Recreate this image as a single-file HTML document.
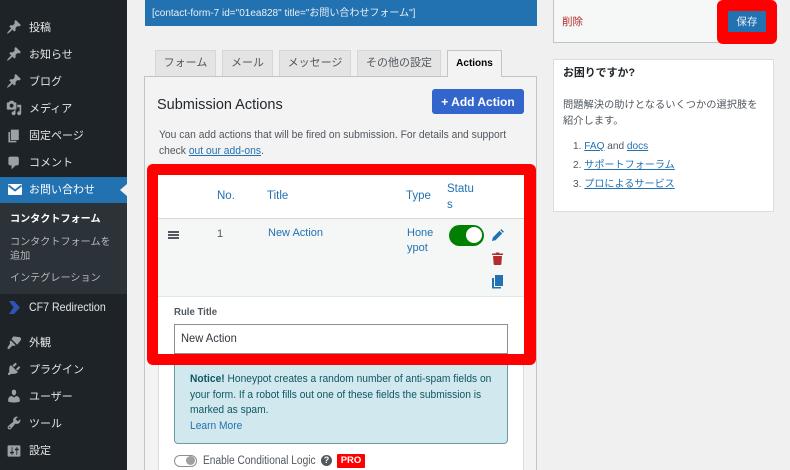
<!DOCTYPE html>
<html style="overflow:hidden"><head><meta charset="utf-8">
<style>
html,body{margin:0;padding:0}
body{width:790px;height:470px;overflow:hidden;background:#f0f0f1;font-family:"Liberation Sans","Noto Sans CJK JP",sans-serif;font-size:12px;color:#50575e}
#w{position:absolute;left:0;top:0;width:790px;height:470px;overflow:hidden;background:#f0f0f1}
.a{position:absolute;white-space:nowrap;transform-origin:0 0}
.b{position:absolute;box-sizing:border-box}
.m{position:absolute;left:29px;color:#e4e6e8;font-size:11px;line-height:16px;white-space:nowrap}
.s{position:absolute;left:10px;color:#b4b9be;font-size:10.100px;line-height:16px;white-space:nowrap}
.t{position:absolute;top:50px;height:26px;box-sizing:border-box;background:#e4e4e4;border:1px solid #d5d6d8;border-bottom:0;text-align:center;line-height:24px;font-size:11px;color:#50575e}
.l{color:#2271b1}
u{text-decoration:underline}
svg{position:absolute;display:block}
.i{fill:#9ca1a7}
</style></head><body><div id="w">
<div class="b" style="left:0;top:0;width:127px;height:470px;background:#1d2327"></div>
<div class="b" style="left:0;top:177px;width:127px;height:26px;background:#2271b1"></div>
<div class="b" style="left:0;top:203px;width:127px;height:91px;background:#2c3338"></div>
<div class="b" style="left:120px;top:184px;width:0;height:0;border:6px solid transparent;border-left:0;border-right:7px solid #f0f0f1"></div>

<svg style="left:6px;top:19px" width="16" height="16" viewBox="0 0 20 20"><path class="i" d="M10.44 3.02l1.82-1.82 6.36 6.35-1.83 1.82c-1.05-.68-2.48-.57-3.41.36l-.75.75c-.92.93-1.04 2.35-.35 3.41l-1.83 1.82-2.41-2.41-2.8 2.79c-.42.42-3.38 2.71-3.8 2.29s1.86-3.39 2.28-3.81l2.79-2.79L4.1 9.36l1.83-1.82c1.05.69 2.48.57 3.4-.36l.75-.75c.93-.92 1.05-2.35.36-3.41z"/></svg>
<svg style="left:6px;top:46px" width="16" height="16" viewBox="0 0 20 20"><path class="i" d="M10.44 3.02l1.82-1.82 6.36 6.35-1.83 1.82c-1.05-.68-2.48-.57-3.41.36l-.75.75c-.92.93-1.04 2.35-.35 3.41l-1.83 1.82-2.41-2.41-2.8 2.79c-.42.42-3.38 2.71-3.8 2.29s1.86-3.39 2.28-3.81l2.79-2.79L4.1 9.36l1.83-1.82c1.05.69 2.48.57 3.4-.36l.75-.75c.93-.92 1.05-2.35.36-3.41z"/></svg>
<svg style="left:6px;top:73px" width="16" height="16" viewBox="0 0 20 20"><path class="i" d="M10.44 3.02l1.82-1.82 6.36 6.35-1.83 1.82c-1.05-.68-2.48-.57-3.41.36l-.75.75c-.92.93-1.04 2.35-.35 3.41l-1.83 1.82-2.41-2.41-2.8 2.79c-.42.42-3.38 2.71-3.8 2.29s1.86-3.39 2.28-3.81l2.79-2.79L4.1 9.36l1.83-1.82c1.05.69 2.48.57 3.4-.36l.75-.75c.93-.92 1.05-2.35.36-3.41z"/></svg>
<svg style="left:6px;top:100px" width="16" height="16" viewBox="0 0 20 20"><path class="i" d="M13 11V4c0-.55-.45-1-1-1h-1.670L9 1H5L3.670 3H2c-.55 0-1 .45-1 1v7c0 .55.45 1 1 1h10c.55 0 1-.45 1-1zM7 4.500c1.380 0 2.500 1.120 2.500 2.500S8.380 9.500 7 9.500 4.500 8.380 4.500 7 5.620 4.500 7 4.500zM14 6h5v10.500c0 1.380-1.120 2.500-2.500 2.500S14 17.880 14 16.500s1.120-2.500 2.500-2.500c.17 0 .34.02.5.050V9h-3V6zm-4 8.050V13h2v3.500c0 1.380-1.120 2.500-2.500 2.500S7 17.880 7 16.500 8.120 14 9.500 14c.17 0 .34.02.5.050z"/></svg>
<svg style="left:6px;top:128px" width="16" height="16" viewBox="0 0 20 20"><path class="i" d="M6 15V2h10v13H6zm-1 1h8v2H3V5h2v11z"/></svg>
<svg style="left:6px;top:155px" width="16" height="16" viewBox="0 0 20 20"><path class="i" d="M5 2h9c1.100 0 2 .9 2 2v7c0 1.100-.9 2-2 2h-2l-5 5v-5H5c-1.100 0-2-.9-2-2V4c0-1.100.9-2 2-2z"/></svg>
<svg style="left:8px;top:184px" width="14" height="11" viewBox="0 0 14 11"><rect width="14" height="11" rx="1" fill="#fff"/><path d="M0.500 1.500L7 6.500l6.500-5" fill="none" stroke="#2271b1" stroke-width="1.800"/></svg>
<svg style="left:9px;top:301px" width="11" height="13" viewBox="0 0 11 13"><path d="M0 0h5l6 6.500L5 13H0l4.500-6.500z" fill="#2f55b4"/></svg>
<svg style="left:6px;top:334px" width="16" height="16" viewBox="0 0 20 20"><path class="i" d="M9 3l9 1 1 3-5 6.500-7-7zM6 8l6 6-2 1-2-.5L3.500 19 1.500 17.500 5 12l-.5-2z"/></svg>
<svg style="left:6px;top:361px" width="16" height="16" viewBox="0 0 20 20"><path class="i" d="M13.110 4.360L9.870 7.600 8 5.730l3.240-3.240c.35-.34 1.050-.2 1.560.32.520.510.660 1.210.310 1.550zm-8 1.770l.91-1.120 9.010 9.010-1.190.84c-.71.710-2.630 1.160-3.820 1.160H6.140L4.900 17.260c-.59.590-1.540.59-2.120 0-.59-.58-.59-1.530 0-2.120l1.240-1.240v-3.880c0-1.130.4-3.190 1.090-3.890zm7.260 3.970l3.240-3.240c.340-.350 1.040-.21 1.550.31.520.510.660 1.210.310 1.550l-3.240 3.250z"/></svg>
<svg style="left:6px;top:388px" width="16" height="16" viewBox="0 0 20 20"><path class="i" d="M10 9.250c-2.270 0-2.730-3.440-2.730-3.440C7 4.020 7.820 2 9.970 2c2.160 0 2.980 2.020 2.710 3.810 0 0-.41 3.440-2.680 3.440zm0 2.570L12.720 10c2.390 0 4.520 2.330 4.520 4.530v2.490s-3.650 1.130-7.240 1.130c-3.650 0-7.240-1.130-7.240-1.130v-2.490c0-2.250 1.940-4.480 4.470-4.480z"/></svg>
<svg style="left:6px;top:415px" width="16" height="16" viewBox="0 0 20 20"><path class="i" d="M16.680 9.770c-1.340 1.340-3.300 1.670-4.950.99l-5.410 6.520c-.99.990-2.590.99-3.580 0s-.99-2.590 0-3.570l6.520-5.420c-.68-1.650-.35-3.610.99-4.950 1.280-1.280 3.120-1.620 4.720-1.060l-2.890 2.890 2.820 2.820 2.860-2.870c.53 1.580.18 3.400-1.080 4.650zM3.810 16.210c.4.390 1.040.39 1.430 0 .4-.4.4-1.040 0-1.430-.39-.4-1.030-.4-1.430 0-.39.39-.39 1.030 0 1.430z"/></svg>
<svg style="left:6px;top:443px" width="16" height="16" viewBox="0 0 20 20"><path class="i" d="M18 16V4c0-.55-.45-1-1-1H3c-.55 0-1 .45-1 1v12c0 .55.45 1 1 1h14c.55 0 1-.45 1-1zM8 11h1c.55 0 1 .45 1 1s-.45 1-1 1H8v1.500c0 .280-.22.5-.5.5s-.5-.22-.5-.5V13H6c-.55 0-1-.45-1-1s.45-1 1-1h1V5.500c0-.28.22-.5.5-.5s.5.220.5.5V11zm5-2h-1c-.55 0-1-.45-1-1s.45-1 1-1h1V5.500c0-.28.22-.5.5-.5s.5.220.5.5V7h1c.55 0 1 .45 1 1s-.45 1-1 1h-1v5.500c0 .280-.22.5-.5.5s-.5-.22-.5-.5V9z"/></svg>

<div class="m" style="top:20px">投稿</div>
<div class="m" style="top:47px">お知らせ</div>
<div class="m" style="top:74px">ブログ</div>
<div class="m" style="top:101px">メディア</div>
<div class="m" style="top:128px">固定ページ</div>
<div class="m" style="top:155px">コメント</div>
<div class="m" style="top:182px;color:#fff">お問い合わせ</div>
<div class="s" style="top:212px;color:#fff;font-weight:bold">コンタクトフォーム</div>
<div class="s" style="top:235px">コンタクトフォームを</div>
<div class="s" style="top:249px">追加</div>
<div class="s" style="top:271px">インテグレーション</div>
<div class="a" style="left:29px;top:299px;font-size:12px;line-height:16px;color:#e4e6e8;transform:scaleX(.885)">CF7 Redirection</div>
<div class="m" style="top:335px">外観</div>
<div class="m" style="top:362px">プラグイン</div>
<div class="m" style="top:389px">ユーザー</div>
<div class="m" style="top:416px">ツール</div>
<div class="m" style="top:443px">設定</div>

<div class="b" style="left:145px;top:0;width:392px;height:26px;background:#2271b1"></div>
<div class="a" style="left:152px;top:6px;font-size:10px;line-height:15px;color:#e8f0f6">[contact-form-7 id="01ea828" title="お問い合わせフォーム"]</div>

<div class="b" style="left:144px;top:76px;width:393px;height:394px;background:#f3f3f3;border:1px solid #c3c4c7;border-bottom:0"></div>
<div class="t" style="left:155px;width:61px">フォーム</div>
<div class="t" style="left:222px;width:51px">メール</div>
<div class="t" style="left:279px;width:72px">メッセージ</div>
<div class="t" style="left:357px;width:84px">その他の設定</div>
<div class="t" style="left:447px;width:55px;height:27px;line-height:25px;background:#f3f3f3;border-color:#c3c4c7;color:#000;font-weight:bold;font-size:10px">Actions</div>

<div class="a" style="left:157px;top:96px;font-size:14.500px;line-height:18px;color:#23282d">Submission Actions</div>
<div class="b" style="left:432px;top:89px;width:92px;height:25px;background:#3366cc;border-radius:3px;color:#fff;font-size:12px;font-weight:bold;line-height:26px;text-align:center">+ Add Action</div>
<div class="a" style="left:159px;top:127px;font-size:11.300px;line-height:16px;transform:scaleX(.913)">You can add actions that will be fired on submission. For details and support</div>
<div class="a" style="left:159px;top:143px;font-size:11.300px;line-height:16px;transform:scaleX(.913)">check <u class="l">out our add-ons</u>.</div>

<div class="b" style="left:158px;top:350px;width:366px;height:120px;background:#fff;border-left:1px solid #dcdcde;border-right:1px solid #dcdcde"></div>
<div class="b" style="left:174px;top:360px;width:334px;height:84px;background:#d1e9ee;border:1px solid #6e9aa6;border-radius:0 0 4px 4px"></div>

<div class="b" style="left:147px;top:164px;width:389px;height:201px;background:#f00;border-radius:6px"></div>
<div class="b" style="left:158px;top:175px;width:366px;height:179px;background:#fff"></div>
<div class="b" style="left:158px;top:218px;width:366px;height:79px;background:#f5f7f7;border-top:1px solid #d5d7d9;border-bottom:1px solid #e4e5e6"></div>

<div class="a l" style="left:217px;top:188px;font-size:11.500px;line-height:16px">No.</div>
<div class="a l" style="left:267px;top:188px;font-size:11.500px;line-height:16px">Title</div>
<div class="a l" style="left:406px;top:188px;font-size:11.500px;line-height:16px">Type</div>
<div class="a l" style="left:447px;top:181px;font-size:11.500px;line-height:16px">Statu</div>
<div class="a l" style="left:447px;top:197px;font-size:11.500px;line-height:16px">s</div>

<div class="b" style="left:168px;top:231px;width:11px;height:1.700px;background:#50575e"></div>
<div class="b" style="left:168px;top:234px;width:11px;height:1.700px;background:#50575e"></div>
<div class="b" style="left:168px;top:237px;width:11px;height:1.700px;background:#50575e"></div>
<div class="a" style="left:217px;top:226px;font-size:11px;line-height:16px">1</div>
<div class="a l" style="left:268px;top:225px;font-size:11px;line-height:16px">New Action</div>
<div class="a l" style="left:407px;top:225px;font-size:11px;line-height:16px">Hone</div>
<div class="a l" style="left:407px;top:240px;font-size:11px;line-height:16px">ypot</div>
<div class="b" style="left:449px;top:225px;width:35px;height:21px;border-radius:11px;background:#008000"></div>
<div class="b" style="left:466px;top:227px;width:16px;height:16px;border-radius:50%;background:#fff"></div>
<svg style="left:492px;top:229px" width="12" height="12" viewBox="0 0 12 12"><path d="M0 12l.8-3.500L7.500 1.800l2.700 2.700L3.500 11.200zM8.300 1l1-1 2.700 2.700-1 1z" fill="#2271b1"/></svg>
<svg style="left:492px;top:252px" width="11" height="13" viewBox="0 0 11 13"><path d="M0 1.500h3.500L4 .5h3l.5 1H11v1.500H0zM1 4h9l-.7 8.200a.9.9 0 01-.9.800H2.600a.9.9 0 01-.9-.8z" fill="#b32d2e"/></svg>
<svg style="left:492px;top:275px" width="11" height="14" viewBox="0 0 11 14"><path d="M3 0h8v11H3z" fill="#2271b1"/><path d="M0 3h2v9h7v1.500H0z" fill="#2271b1"/></svg>

<div class="a" style="left:174px;top:304px;font-size:10.500px;font-weight:bold;line-height:16px;color:#50575e;transform:scaleX(.915)">Rule Title</div>
<div class="b" style="left:174px;top:324px;width:334px;height:30px;background:#fff;border:1px solid #8c8f94"></div>
<div class="a" style="left:181px;top:330px;font-size:12px;line-height:16px;color:#32373c;transform:scaleX(.93)">New Action</div>

<div class="a" style="left:190px;top:372px;font-size:11px;line-height:15.500px;color:#0f5663;transform:scaleX(.93)"><b>Notice!</b> Honeypot creates a random number of anti-spam fields on<br>your form. If a robot fills out one of these fields the submission is<br>marked as spam.<br><span class="l">Learn More</span></div>

<div class="b" style="left:174px;top:455px;width:23px;height:11.500px;border-radius:6px;background:#fff;border:1px solid #8c8f94"></div>
<div class="b" style="left:186px;top:456px;width:9px;height:9px;border-radius:50%;background:#a0a0a0"></div>
<div class="a" style="left:203px;top:453px;font-size:11.500px;line-height:16px;transform:scaleX(.885)">Enable Conditional Logic</div>
<div class="b" style="left:321px;top:455px;width:11px;height:11px;border-radius:50%;background:#50575e;color:#fff;font-size:9px;font-weight:bold;line-height:11px;text-align:center">?</div>
<div class="b" style="left:337px;top:454px;width:28px;height:14px;background:#f00;color:#fff;font-size:9.500px;font-weight:bold;line-height:14px;text-align:center;border-radius:1px">PRO</div>

<div class="b" style="left:553px;top:-1px;width:221px;height:44px;background:#f6f7f7;border:1px solid #c3c4c7"></div>
<div class="a" style="left:562px;top:14px;font-size:10.500px;line-height:16px;color:#b32d2e">削除</div>
<div class="b" style="left:717px;top:0;width:60px;height:44px;background:#f00;border-radius:6px"></div>
<div class="b" style="left:728px;top:11px;width:38px;height:21px;background:#2271b1;color:#e8f0f6;font-size:10.500px;line-height:22px;text-align:center">保存</div>

<div class="b" style="left:553px;top:59px;width:221px;height:153px;background:#fff;border:1px solid #dcdcde"></div>
<div class="a" style="left:563px;top:65px;font-size:10.900px;font-weight:bold;line-height:16px;color:#1d2327">お困りですか?</div>
<div class="a" style="left:563px;top:98px;font-size:10.250px;line-height:16px">問題解決の助けとなるいくつかの選択肢を</div>
<div class="a" style="left:563px;top:114px;font-size:10.250px;line-height:16px">紹介します。</div>
<div class="a" style="left:573px;top:139px;font-size:10.100px;line-height:16px">1. <u class="l">FAQ</u> and <u class="l">docs</u></div>
<div class="a" style="left:573px;top:158px;font-size:10.100px;line-height:16px">2. <u class="l">サポートフォーラム</u></div>
<div class="a" style="left:573px;top:177px;font-size:10.100px;line-height:16px">3. <u class="l">プロによるサービス</u></div>
</div></body></html>
